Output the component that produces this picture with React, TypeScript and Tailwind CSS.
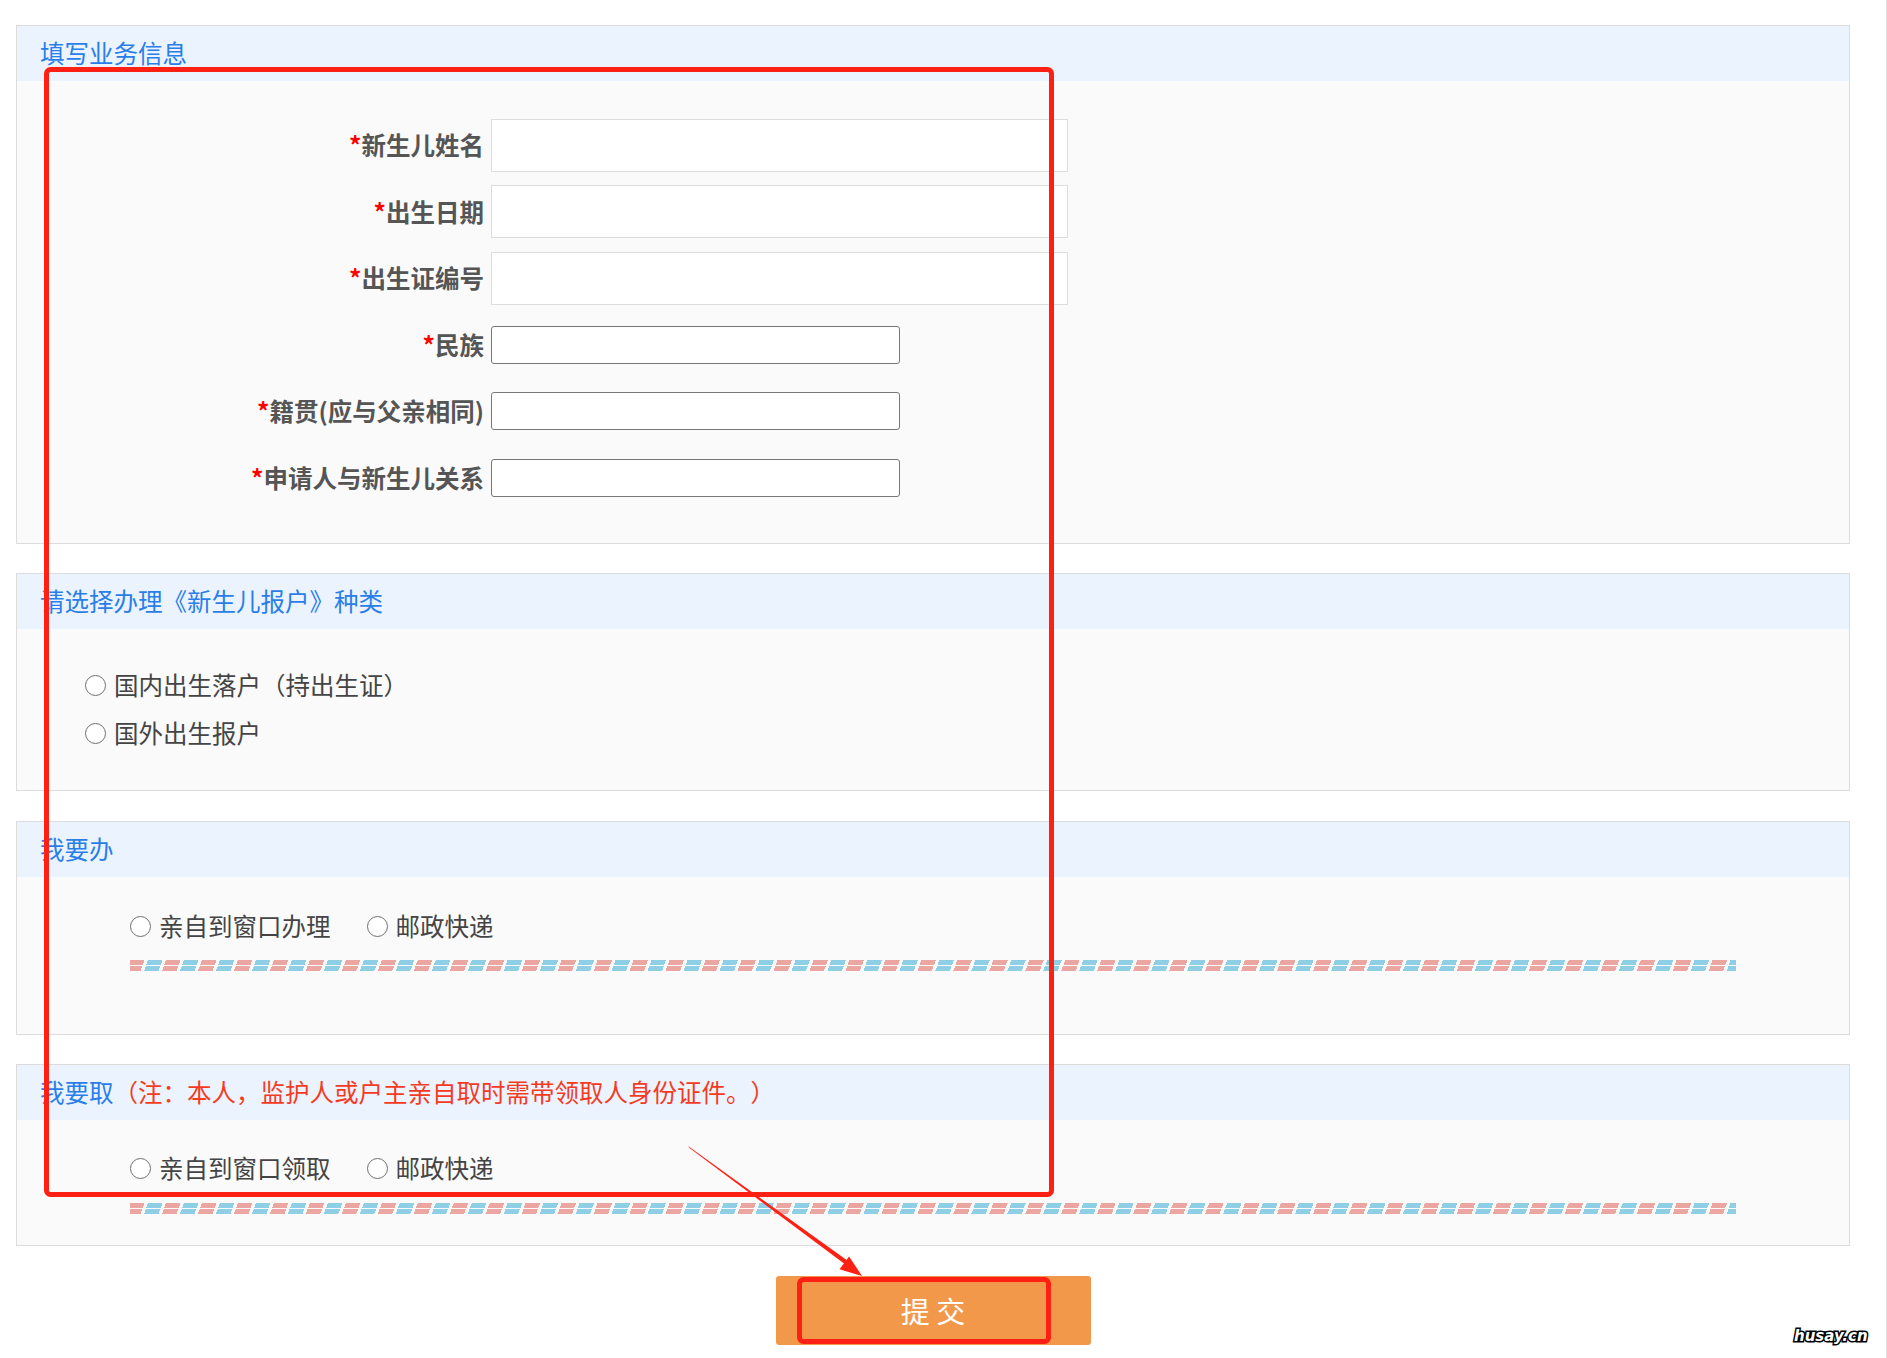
import type { ReactNode } from "react";

const cjk = "font-[family-name:'Noto_Sans_CJK_SC','Noto_Sans',sans-serif]";

const stripe =
  "h-[11px] w-[1606px] bg-[image:linear-gradient(to_bottom,transparent_5px,#fafafa_5px,#fafafa_6px,transparent_6px),repeating-linear-gradient(110deg,#eca6a1_0px,#eca6a1_13.6px,transparent_13.6px,transparent_16.9px,#8fcfe6_16.9px,#8fcfe6_30.5px,transparent_30.5px,transparent_33.8px)]";

function Panel({ title, children, className }: { title: ReactNode; children: ReactNode; className?: string }) {
  return (
    <div className="border border-[#dcdcdc] bg-[#fafafa]">
      <div className="flex h-[55px] items-center bg-[#ebf3fe] pl-[23px] text-[24.5px] leading-none text-[#2a7ee9]">
        {title}
      </div>
      <div className={className}>{children}</div>
    </div>
  );
}

function Radio({ label }: { label: string }) {
  return (
    <label className="flex items-center">
      <span className="h-[21px] w-[21px] rounded-full border-[1.5px] border-[#6f6f6f] bg-white" />
      <span className="ml-[8px] text-[24.5px] leading-none text-[#444]">{label}</span>
    </label>
  );
}

function Row({ label, wide }: { label: string; wide?: boolean }) {
  return (
    <div className="flex h-[66.5px] items-center">
      <div className="w-[474px] pr-[7px] text-right text-[24.5px] font-bold leading-none text-[#555]">
        <span className="text-[#f00]">*</span>
        {label}
      </div>
      {wide ? (
        <input className="h-[53px] w-[577px] border border-[#dddddd] bg-white outline-none" />
      ) : (
        <input className="h-[38px] w-[409px] rounded-[3px] border border-[#777] bg-white outline-none" />
      )}
    </div>
  );
}

export default function App() {
  return (
    <div className={`relative flex min-h-[1358px] w-[1887px] bg-white [text-spacing-trim:space-all] ${cjk}`}>
      <div className="w-[1886px] pl-[16px] pr-[36px] pt-[25px]">
        <Panel title="填写业务信息" className="pb-[32px] pt-[31px]">
          <Row label="新生儿姓名" wide />
          <Row label="出生日期" wide />
          <Row label="出生证编号" wide />
          <Row label="民族" />
          <Row label="籍贯(应与父亲相同)" />
          <Row label="申请人与新生儿关系" />
        </Panel>

        <div className="mt-[29px]">
          <Panel title="请选择办理《新生儿报户》种类" className="pb-[33px] pl-[68px] pt-[32px]">
            <div className="flex h-[48px] items-center">
              <Radio label="国内出生落户（持出生证）" />
            </div>
            <div className="flex h-[48px] items-center">
              <Radio label="国外出生报户" />
            </div>
          </Panel>
        </div>

        <div className="mt-[30px]">
          <Panel title="我要办" className="pb-[63px] pl-[113px] pt-[29px]">
            <div className="flex h-[40px] items-center gap-[36px]">
              <Radio label="亲自到窗口办理" />
              <Radio label="邮政快递" />
            </div>
            <div className={`mt-[14px] ${stripe}`} />
          </Panel>
        </div>

        <div className="mt-[29px]">
          <Panel
            title={
              <>
                <span>我要取</span>
                <span className="text-[#f53b1f]">（注：本人，监护人或户主亲自取时需带领取人身份证件。）</span>
              </>
            }
            className="pb-[31px] pl-[113px] pt-[28px]"
          >
            <div className="flex h-[40px] items-center gap-[36px]">
              <Radio label="亲自到窗口领取" />
              <Radio label="邮政快递" />
            </div>
            <div className={`mt-[15px] ${stripe}`} />
          </Panel>
        </div>

        <div className="mt-[30px] flex justify-center">
          <button className="h-[69px] w-[315px] rounded-[3px] bg-[#f2984a] text-[29px] leading-none text-white">
            提 交
          </button>
        </div>
      </div>
      <div className="w-px bg-[#dddddd]" />

      <svg className="pointer-events-none absolute left-0 top-0" width="1887" height="1358" viewBox="0 0 1887 1358">
        <rect x="46.5" y="69.5" width="1005" height="1125" rx="4" fill="none" stroke="#ff2014" strokeWidth="5" />
        <rect x="799.5" y="1279.5" width="249" height="62" rx="4" fill="none" stroke="#ff2014" strokeWidth="5" />
        <polygon points="688,1146 689.5,1148 846,1265 848,1261" fill="#ff2014" />
        <polygon points="862,1276 839.5,1269.3 849.1,1256.5" fill="#ff2014" />
      </svg>

      <div className="absolute left-[1794px] top-[1329px] font-[family-name:'DejaVu_Sans',sans-serif] text-[15px] font-bold italic leading-none text-white [-webkit-text-stroke:3px_#000] [paint-order:stroke_fill]">
        husay.cn
      </div>
    </div>
  );
}
